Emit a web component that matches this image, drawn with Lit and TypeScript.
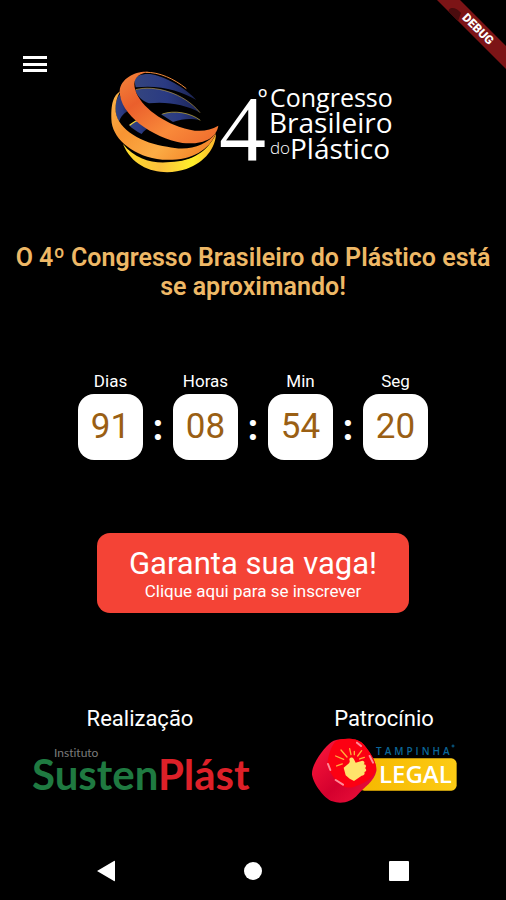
import { LitElement, html, css } from "lit";
import { customElement, property, state } from "lit/decorators.js";

/** Congress logo: ribbon globe and wordmark. */
@customElement("congress-logo")
class CongressLogo extends LitElement {
  static styles = css`
    :host { display: block; }
    .logo { display: block; width: 100%; height: auto; overflow: visible; }
    .word { font-family: "Open Sans", "Noto Sans", sans-serif; font-size: 25px; fill: #fff; }
    .large { font-size: 28px; }
    .small { font-size: 17px; font-weight: 300; }
    .four { font-family: "Liberation Serif", serif; font-size: 94px; fill: #fff; }
    .ordinal { font-family: "Open Sans", sans-serif; font-size: 25px; fill: #fff; }
  `;
  render() {
    return html`<svg class="logo" viewBox="0 0 288 108" role="img" aria-label="4º Congresso Brasileiro do Plástico">
      <defs>
        <linearGradient id="red" x1="0" y1="0" x2="1" y2="1">
          <stop offset="0" stop-color="#f4853a" /><stop offset=".3" stop-color="#ea5f2c" />
          <stop offset=".65" stop-color="#f98a3a" /><stop offset="1" stop-color="#ee6a2c" />
        </linearGradient>
        <linearGradient id="amber" x1="0" y1="0" x2="1" y2=".6">
          <stop offset="0" stop-color="#fbb54a" /><stop offset=".35" stop-color="#f79432" />
          <stop offset=".7" stop-color="#fbac45" /><stop offset="1" stop-color="#f58a2c" />
        </linearGradient>
        <linearGradient id="yellow" x1="0" y1="0" x2="1" y2="0">
          <stop offset="0" stop-color="#ffdf2a" /><stop offset=".4" stop-color="#fbc03c" />
          <stop offset=".75" stop-color="#fff02a" /><stop offset="1" stop-color="#fdb52c" />
        </linearGradient>
        <linearGradient id="blue" x1="0" y1="0" x2="1" y2="0">
          <stop offset="0" stop-color="#34457f" /><stop offset=".5" stop-color="#2a3a82" />
          <stop offset="1" stop-color="#1b2350" />
        </linearGradient>
      </defs>
      <g transform="translate(-10 -6) scale(.3333)">
        <path fill="url(#blue)" d="M106 62C112 40 150 38 176 47C222 62 265 90 292 120C245 92 185 74 110 82Z" />
        <path fill="url(#blue)" d="M108 90C165 72 255 98 303 158C260 134 205 124 150 130C128 122 115 108 108 90Z" />
        <path fill="none" stroke="#b89a4a" stroke-width="2" d="M110 89C165 74 255 98 303 158" />
        <path fill="url(#blue)" d="M186 163C225 150 275 158 304 181C275 174 250 176 222 186Z" />
        <path fill="none" stroke="#d8bc40" stroke-width="2" d="M190 162C225 150 275 158 304 181" />
        <path fill="url(#blue)" d="M62 103C68 124 80 140 92 150C76 158 64 170 60 186C44 155 46 125 62 103Z" />
        <path fill="url(#blue)" d="M90 196C104 186 116 180 132 176L160 200C144 204 134 212 128 222C112 214 100 206 90 196Z" />
        <path fill="none" stroke="#f2d43a" stroke-width="4" d="M92 196C104 186 114 181 124 179" />
        <path fill="url(#yellow)" d="M72 252C110 300 165 312 215 306C280 304 325 275 351 222C350 262 320 306 262 327C195 350 105 334 72 252Z" />
        <path fill="#000" d="M88 262C130 300 200 314 285 288C240 312 150 312 88 262Z" />
        <path fill="url(#amber)" d="M64 94C44 106 34 130 38 188C46 240 105 290 190 299C270 304 330 275 351 218C320 260 265 274 205 260C130 250 58 210 50 155C48 130 54 112 64 94Z" />
        <path fill="url(#red)" d="M150 36C110 32 66 55 62 92C62 165 160 232 250 249C310 255 352 236 358 197C325 216 290 218 240 200C170 176 106 120 106 72C106 50 126 38 150 36Z" />
        <path fill="none" stroke="#f28a38" stroke-width="3" d="M140 37C180 36 225 56 262 86" />
      </g>
      <text class="four" x="110" y="94">4</text>
      <text class="ordinal" x="149" y="41">º</text>
      <text class="word" x="161" y="41">Congresso</text>
      <text class="word large" x="160" y="67">Brasileiro</text>
      <text class="word small" x="161" y="88">do</text>
      <text class="word large" x="181" y="93">Plástico</text>
    </svg>`;
  }
}

@customElement("susten-logo")
class SustenLogo extends LitElement {
  static styles = css`
    :host { display: block; }
    .logo { display: block; width: 100%; height: auto; overflow: visible; }
    .name { font-family: Lato, sans-serif; font-size: 42px; font-weight: 700; fill: #1f7a41; }
    .red { fill: #dd2028; }
    .over { font-family: Lato, sans-serif; font-size: 12px; font-variant-ligatures: none; fill: #7b7b7b; }
  `;
  render() {
    return html`<svg class="logo" viewBox="0 0 224 56" role="img" aria-label="Instituto SustenPlást">
      <text class="over" x="26" y="10">Instituto</text>
      <text class="name" x="4" y="43">Susten<tspan class="red">Plást</tspan></text>
    </svg>`;
  }
}

@customElement("tampinha-logo")
class TampinhaLogo extends LitElement {
  static styles = css`
    :host { display: block; }
    .logo { display: block; width: 100%; height: auto; overflow: visible; }
    .top { font-family: "Open Sans", sans-serif; font-size: 10px; font-weight: 600; letter-spacing: 3px; fill: #0b6799; }
    .legal { font-family: "Open Sans", sans-serif; font-size: 24px; font-weight: 600; fill: #fff; }
  `;
  render() {
    return html`<svg class="logo" viewBox="0 0 150 70" role="img" aria-label="Tampinha Legal">
      <defs>
        <linearGradient id="side" x1="0" y1="0" x2="1" y2="1">
          <stop offset="0" stop-color="#ff1a3c" /><stop offset=".55" stop-color="#d4002e" />
          <stop offset="1" stop-color="#f0143c" />
        </linearGradient>
        <linearGradient id="gold" x1="0" y1="0" x2="1" y2="0">
          <stop offset="0" stop-color="#f6b800" /><stop offset="1" stop-color="#fccb14" />
        </linearGradient>
      </defs>
      <g transform="translate(-10 -36) scale(.3333)">
        <rect x="180" y="175" width="293" height="97" rx="16" fill="url(#gold)" />
        <path fill="url(#side)" d="M104 122C140 112 180 114 196 136C214 158 236 192 232 214C226 244 196 262 176 284C160 304 128 314 100 304C74 294 44 252 39 224C36 192 82 132 104 122Z" />
        <path fill="#fc0012" d="M112 122C146 112 180 114 196 136C216 160 236 192 230 212C220 240 190 250 166 260C144 268 126 258 112 242C98 224 84 206 86 184C90 160 98 134 112 122Z" />
        <path fill="none" stroke="#ff8a9a" stroke-width="6" stroke-linecap="round" d="M87 192L94 210M110 240L132 254M174 128L186 138M212 168L222 188" />
        <path fill="#ffe36b" d="M134 203C142 196 154 190 152 182C148 174 158 168 164 176L170 188L190 182C197 182 198 190 194 193C202 193 203 201 198 204C204 208 202 216 196 216C199 222 194 226 188 227L165 243L152 236L140 226Z" />
        <path stroke="#ffb03a" stroke-width="4" stroke-linecap="round" d="M130 192L113 198M134 178L110 168M144 171L126 150M156 164L152 146M166 164L166 154M176 168L188 152M182 177L196 172" />
      </g>
      <text class="top" x="67" y="19">TAMPINHA</text>
      <circle cx="144" cy="10" r="1" fill="none" stroke="#0b6799" />
      <text class="legal" x="70" y="47">LEGAL</text>
    </svg>`;
  }
}

/** A countdown made of labelled boxes separated by colons. */
@customElement("count-down")
class CountDown extends LitElement {
  @property({ attribute: false }) parts: { label: string; value: string }[] = [];
  static styles = css`
    :host { display: block; }
    .row { display: flex; justify-content: center; align-items: flex-end; }
    .unit { display: flex; flex-direction: column; align-items: center; width: 65px; gap: 3px; }
    .label { font-size: 17px; line-height: 20px; color: #fff; }
    .value {
      width: 65px; height: 66px; border-radius: 16px; background: #fff; color: #9a5f14;
      font-size: 35px; line-height: 66px; text-align: center;
    }
    .colon {
      width: 30px; text-align: center; color: #fff;
      font-family: Lato, sans-serif; font-size: 40px; font-weight: 700; line-height: 70px;
    }
  `;
  render() {
    return html`<div class="row" role="timer">
      ${this.parts.map((p, i) => html`
        ${i ? html`<span class="colon">:</span>` : ""}
        <div class="unit">
          <span class="label">${p.label}</span>
          <span class="value">${p.value}</span>
        </div>`)}
    </div>`;
  }
}

@customElement("app-root")
class AppRoot extends LitElement {
  @state() private time = [
    { label: "Dias", value: "91" },
    { label: "Horas", value: "08" },
    { label: "Min", value: "54" },
    { label: "Seg", value: "20" },
  ];

  static styles = css`
    :host {
      display: flex; flex-direction: column; position: relative; overflow: hidden;
      box-sizing: border-box; min-height: 100vh; background: #000; color: #fff;
      font-family: Roboto, "Open Sans", sans-serif;
    }
    button { font-family: inherit; border: 0; padding: 0; background: none; color: inherit; cursor: pointer; }
    .debug { position: absolute; top: 0; right: 0; width: 70px; height: 70px; }
    .debug-text { font-size: 12px; font-weight: 900; fill: #fff; text-anchor: middle; }
    .top {
      display: grid; grid-template-columns: 48px minmax(0, 288px) 48px; justify-content: space-between;
      align-items: start; padding: 40px 11px 0;
    }
    .menu { width: 48px; height: 48px; display: grid; place-items: center; }
    .brand { margin-top: 26px; }
    .headline {
      margin: 69px 0 0; padding: 0 12px; text-align: center; color: #eeb866;
      font-size: 25px; line-height: 29px; font-weight: 600;
    }
    .timer { margin-top: 70px; }
    .cta {
      align-self: center; margin-top: 73px; width: 312px; max-width: 90%; min-height: 80px;
      border-radius: 13px; background: #f44336; color: #fff;
      display: flex; flex-direction: column; align-items: center; justify-content: center;
    }
    .cta-title { font-size: 31px; line-height: 35px; }
    .cta-sub { font-size: 17px; line-height: 20px; }
    .partners {
      display: grid; grid-template-columns: 1fr 1fr; margin: 92px 0 0 18px;
    }
    .partner { display: flex; flex-direction: column; align-items: center; }
    .partner-title { margin: 0; font-size: 22px; line-height: 28px; font-weight: 400; }
    .susten { width: 224px; max-width: 100%; margin-top: 14px; }
    .tampinha { width: 150px; margin-top: 3px; }
    .nav {
      display: grid; grid-template-columns: repeat(3, 1fr); justify-items: center;
      margin-top: auto; padding: 0 34px 5px;
    }
    .nav-button { width: 48px; height: 48px; display: grid; place-items: center; }
  `;

  render() {
    return html`
      <header class="top">
        <button class="menu" aria-label="Menu">
          <svg width="24" height="18" viewBox="0 0 24 18" fill="#fff" aria-hidden="true">
            <path d="M0 1h24v3H0zM0 8h24v3H0zM0 14h24v3H0z" />
          </svg>
        </button>
        <congress-logo class="brand"></congress-logo>
      </header>
      <h1 class="headline">O 4º Congresso Brasileiro do Plástico está se aproximando!</h1>
      <count-down class="timer" .parts=${this.time}></count-down>
      <button class="cta">
        <span class="cta-title">Garanta sua vaga!</span>
        <span class="cta-sub">Clique aqui para se inscrever</span>
      </button>
      <section class="partners">
        <div class="partner">
          <h2 class="partner-title">Realização</h2>
          <susten-logo class="susten"></susten-logo>
        </div>
        <div class="partner">
          <h2 class="partner-title">Patrocínio</h2>
          <tampinha-logo class="tampinha"></tampinha-logo>
        </div>
      </section>
      <nav class="nav">
        <button class="nav-button" aria-label="Voltar">
          <svg width="24" height="24" viewBox="0 0 24 24" fill="#fff"><path d="M2 12L19 2Q20 1 20 3V21Q20 23 19 22Z" /></svg>
        </button>
        <button class="nav-button" aria-label="Início">
          <svg width="24" height="24" viewBox="0 0 24 24" fill="#fff"><circle cx="12" cy="12" r="9" /></svg>
        </button>
        <button class="nav-button" aria-label="Recentes">
          <svg width="24" height="24" viewBox="0 0 24 24" fill="#fff"><rect x="2" y="2" width="20" height="20" rx="1" /></svg>
        </button>
      </nav>
      <svg class="debug" viewBox="0 0 70 70">
        <path fill="#7c1416" d="M1 0H24L70 46V69Z" />
        <path fill="#4a0c0e" d="M13 12C11 8 19 5 25 13L22 21Z" />
        <text class="debug-text" transform="translate(42 29) rotate(45)" y="4">DEBUG</text>
      </svg>
    `;
  }
}
